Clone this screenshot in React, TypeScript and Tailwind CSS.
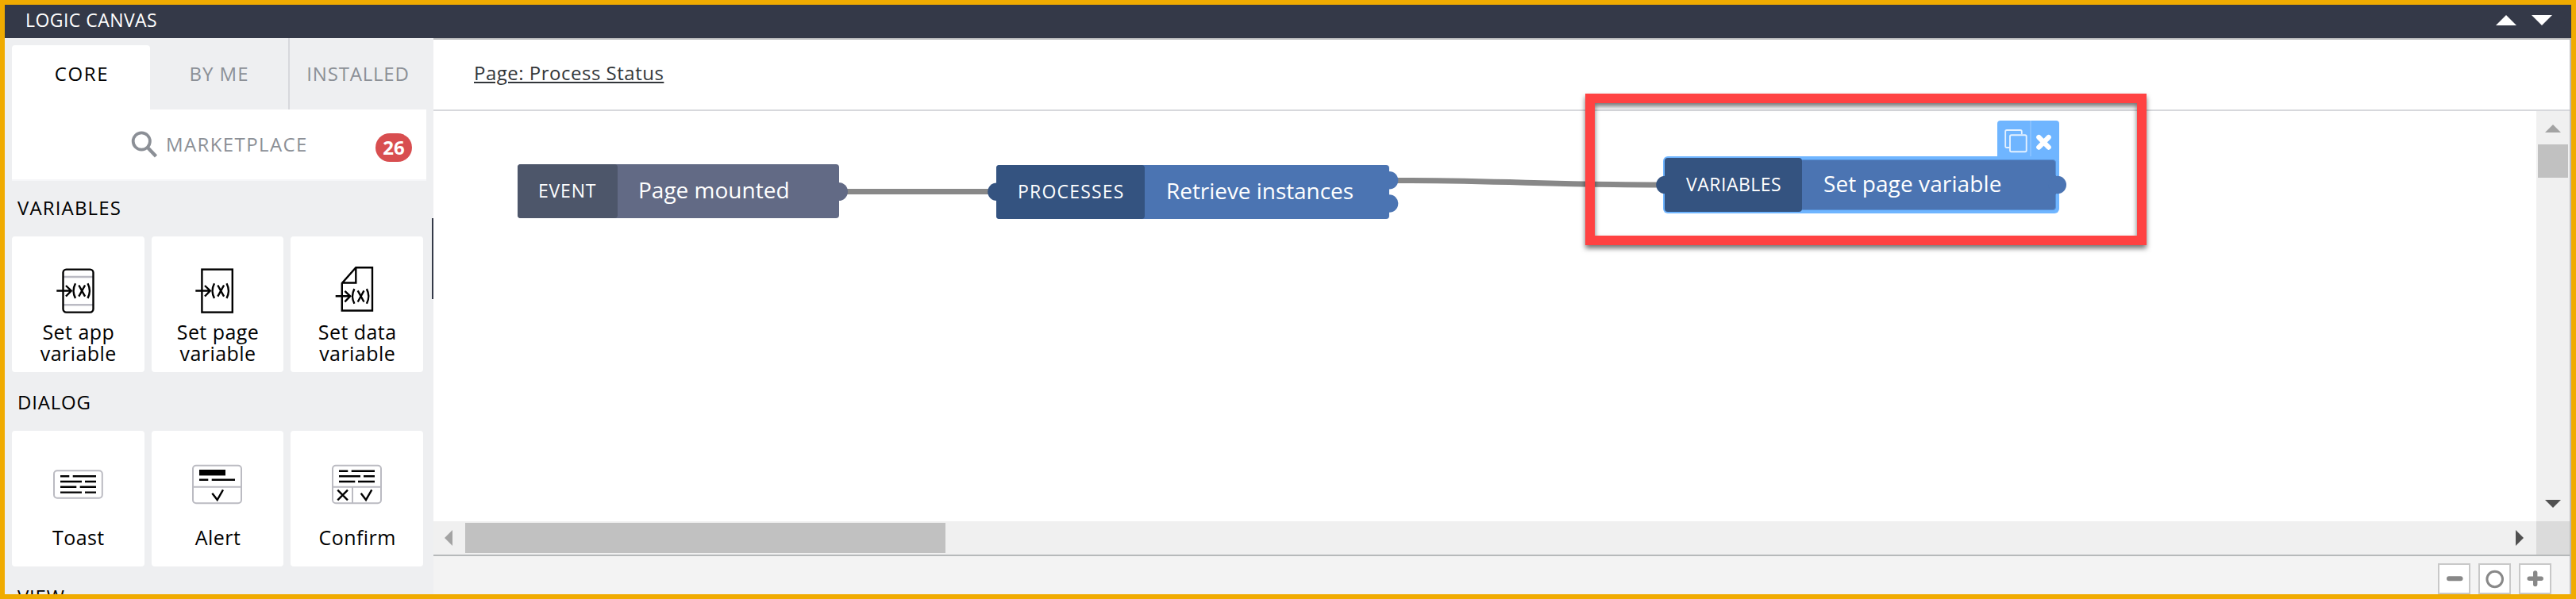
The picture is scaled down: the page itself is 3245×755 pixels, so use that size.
import type { ReactNode } from "react";

function Glyph({ dx = 0, dy = 0 }: { dx?: number; dy?: number }) {
  return (
    <g transform={`translate(${dx} ${dy})`} strokeWidth="2.4">
      <path d="M56.3 68.5H74.5M68 62l6.8 6.5L68 75.5" />
      <path d="M80 59.3q-4.8 9.3 0 18.6M95.5 59.3q4.8 9.3 0 18.6" />
      <path d="M84.3 61.5l7.8 14.2M92.1 61.5l-7.8 14.2" />
    </g>
  );
}

const icons: Record<string, ReactNode> = {
  app: (
    <>
      <path d="M65 51h37M65 86.3h37" stroke="#bbbbc4" strokeWidth="2.4" />
      <rect x="64.5" y="41.6" width="38" height="54" rx="4" />
      <Glyph />
    </>
  ),
  page: (
    <>
      <rect x="63.4" y="41.6" width="38.4" height="54" />
      <Glyph dx={-1} />
    </>
  ),
  data: (
    <>
      <path d="M82.3 39.2H103V93.5H64.8V59zM82.3 39.2V58.5H64.8" />
      <Glyph dx={0.4} dy={6.8} />
    </>
  ),
  toast: (
    <>
      <rect x="53" y="50.2" width="60.8" height="34.6" rx="4" stroke="#bbbbc2" strokeWidth="2" />
      <path d="M61 57.3h11.3M76.7 57.3H106M61 64h27M92 64h14M61 70.7h20.3M85.7 70.7H106M61 77.6h27M92 77.6h14" />
    </>
  ),
  alert: (
    <>
      <path d="M51.5 70.7h62" stroke="#bbbbc2" strokeWidth="2" />
      <rect x="52" y="43.7" width="61" height="47.5" rx="4" stroke="#bbbbc2" strokeWidth="2" />
      <rect x="60" y="49" width="33" height="7.4" fill="#000" stroke="none" />
      <path d="M60 61.8h11.3M75.7 61.8H105M76.3 78.7l6.4 8.3L90 74.3" />
    </>
  ),
  confirm: (
    <>
      <path d="M52.5 70.7h62M78 70.7v21" stroke="#bbbbc2" strokeWidth="2" />
      <rect x="53" y="43.7" width="61" height="47.5" rx="4" stroke="#bbbbc2" strokeWidth="2" />
      <path d="M61 50.7h11.3M76.7 50.7H106M61 57.3h27M92 57.3h14M61 64h20.3M85 64h21" />
      <path d="M59.3 74.7L72 87.3M72 74.7L59.3 87.3M88.7 78.7L95 87l7.3-12.7" />
    </>
  ),
};

function Card({ icon, label }: { icon: string; label: string }) {
  return (
    <div className="flex h-[171px] flex-1 flex-col overflow-hidden rounded bg-white">
      <svg className="h-[100px] w-full shrink-0" viewBox="0 0 166.67 100" fill="none" stroke="#000" strokeWidth="2.4">
        {icons[icon]}
      </svg>
      <div className="flex flex-1 items-center justify-center pb-[3px] pl-px text-center text-[25px] leading-[27px] tracking-[0.45px] whitespace-pre-line text-black">
        {label}
      </div>
    </div>
  );
}

function Section({ title, cards, first }: { title: string; cards: [string, string][]; first?: boolean }) {
  return (
    <section>
      <h2
        className={
          (first ? "h-[70px] pb-[2px] tracking-[1.15px]" : "h-[74px] pt-px tracking-[0.8px]") +
          " flex items-center pl-[16px] text-[24px] text-black"
        }
      >
        {title}
      </h2>
      <div className="flex gap-[9px] pr-[13px] pl-[9px]">
        {cards.map(([icon, label]) => (
          <Card key={icon} icon={icon} label={label} />
        ))}
      </div>
    </section>
  );
}

function Sidebar() {
  return (
    <aside className="relative w-[540px] shrink-0 overflow-hidden bg-[#eeeff1]">
      <nav className="flex h-[90px] pl-[9px] text-[24px] text-[#8b8f96]">
        <div className="mt-[9px] flex w-[174px] items-center justify-center rounded-t bg-white pb-[9px] pl-[2px] tracking-[1.6px] text-black">
          CORE
        </div>
        <div className="flex w-[176px] items-center justify-center border-r-2 border-[#d7d8dc] tracking-[1px]">BY ME</div>
        <div className="flex w-[172px] items-center justify-center tracking-[0.8px]">INSTALLED</div>
      </nav>
      <div className="ml-[9px] flex h-[90px] w-[522px] items-center border-b-2 border-[#f5f6f8] bg-white pl-[150px] text-[24px] text-[#8b8f96]">
        <svg className="h-[34px] w-[34px]" viewBox="0 0 34 34" fill="none" stroke="#8b8f96">
          <circle cx="13.3" cy="13" r="10.6" strokeWidth="3.8" />
          <path d="M21.5 21.5L31.5 32" strokeWidth="4.4" />
        </svg>
        <span className="-mt-px ml-[10px] tracking-[1.4px]">MARKETPLACE</span>
        <span className="mt-[8px] mr-[18px] ml-auto flex h-[36px] w-[46px] items-center justify-center rounded-full bg-[#d84e50] pb-px font-bold text-white">
          26
        </span>
      </div>
      <Section
        first
        title="VARIABLES"
        cards={[
          ["app", "Set app\nvariable"],
          ["page", "Set page\nvariable"],
          ["data", "Set data\nvariable"],
        ]}
      />
      <Section
        title="DIALOG"
        cards={[
          ["toast", "Toast"],
          ["alert", "Alert"],
          ["confirm", "Confirm"],
        ]}
      />
      <Section title="VIEW" cards={[]} />
      <div className="absolute top-[227px] right-0 h-[102px] w-[2px] bg-[#343948]" />
    </aside>
  );
}

function Canvas() {
  return (
    <div className="relative h-[517px] flex-1 overflow-hidden bg-white">
      <svg className="absolute inset-0 h-[517px] w-[2649px]" viewBox="546 140 2649 517" fill="none">
        <path d="M1060 241.5H1250M1755 227.5C1890 227.5 1955 233 2092 233" stroke="#888" strokeWidth="7" />
        <circle cx="1056.5" cy="241.5" r="11.5" fill="#626a85" />
        <circle cx="1255.5" cy="241.8" r="11.3" fill="#345380" />
        <circle cx="1750" cy="227.3" r="11.3" fill="#4b74b2" />
        <circle cx="1750" cy="256.5" r="11.3" fill="#4b74b2" />
      </svg>

      <div className="absolute top-[67px] left-[106px] flex h-[68px] w-[405px] rounded bg-[#626a85] text-white">
        <div className="flex w-[126px] items-center rounded bg-[#4d566a] pb-[2px] pl-[26px] text-[23px] tracking-[0.8px]">EVENT</div>
        <div className="flex items-center pb-[5px] pl-[26px] text-[28px]">Page mounted</div>
      </div>

      <div className="absolute top-[68px] left-[709px] flex h-[68px] w-[495px] rounded bg-[#4b74b2] text-white">
        <div className="flex w-[187px] items-center rounded bg-[#345380] pb-[2px] pl-[27px] text-[23px] tracking-[1.2px]">PROCESSES</div>
        <div className="flex items-center pb-[5px] pl-[27px] text-[28px] tracking-[-0.05px]">Retrieve instances</div>
      </div>

      <div className="absolute top-[12px] left-[1969.5px] flex h-[50px] w-[78.5px] rounded-t bg-[#6fb5ff]">
        <svg className="h-[50px] w-[78.5px]" viewBox="2515.5 152 78.5 50" fill="none">
          <path d="M2557.5 152v45" stroke="#96c9ff" strokeWidth="1.2" />
          <path
            d="M2531 186h-3.5q-1.8 0-1.8-1.8v-18.4q0-1.8 1.8-1.8h17q1.8 0 1.8 1.8v3.5"
            stroke="#e4f1ff"
            strokeWidth="1.8"
          />
          <rect x="2531.5" y="170.2" width="20.7" height="21" rx="1.8" stroke="#e4f1ff" strokeWidth="1.9" />
          <path d="M2567.8 173l12.4 12.6M2580.2 173l-12.4 12.6" stroke="#fff" strokeWidth="6.2" strokeLinecap="round" />
        </svg>
      </div>
      <div className="absolute top-[57px] left-[1549px] flex h-[72px] w-[499px] rounded-md bg-[#6fb5ff] py-[2px] pl-[2px] text-white">
        <div className="z-10 flex w-[173px] items-center rounded bg-[#345380] pb-[2px] pl-[27px] text-[23px] tracking-[0.5px]">VARIABLES</div>
        <div className="-ml-[3px] my-[2px] flex w-[323px] items-center rounded-sm border border-[#5590d8] bg-[#4b74b2] pb-[5px] pl-[29px] text-[28px] tracking-[0.1px]">
          Set page variable
        </div>
      </div>
      <svg className="absolute top-[80px] left-[1538px] h-[26px] w-[522px]" viewBox="2084 220 522 26">
        <circle cx="2097.5" cy="233" r="11.3" fill="#345380" />
        <circle cx="2591.7" cy="233" r="11.3" fill="#4b74b2" />
        <path d="M2586 221h4v24h-4z" fill="#4b74b2" />
      </svg>
    </div>
  );
}

function ZoomButton({ children }: { children: ReactNode }) {
  return (
    <div className="h-[39px] w-[41px] border-2 border-[#c8c8c8] bg-white">
      <svg className="h-[35px] w-[37px]" viewBox="0 0 37 35" fill="none" stroke="#888" strokeLinecap="round">
        {children}
      </svg>
    </div>
  );
}

function Triangle({ points, fill, className }: { points: string; fill: string; className: string }) {
  return (
    <svg className={className} fill={fill}>
      <polygon points={points} />
    </svg>
  );
}

export default function App() {
  return (
    <div className="relative flex h-[755px] w-[3245px] flex-col overflow-hidden border-6 border-[#f0ab00] bg-white font-['Open_Sans',sans-serif]">
      <header className="flex h-[42px] shrink-0 items-center bg-[#343948] pr-[24px] pl-[26px] text-[23px] text-white">
        <span className="-mt-[4px] tracking-[0.45px]">LOGIC CANVAS</span>
        <Triangle className="-mt-[3px] ml-auto h-[13px] w-[26px]" fill="#fff" points="0,13 13,0 26,13" />
        <Triangle className="-mt-[3px] ml-[19px] h-[13px] w-[26px]" fill="#fff" points="0,0 26,0 13,13" />
      </header>
      <div className="flex min-h-0 flex-1">
        <Sidebar />
        <main className="flex min-w-0 flex-1 flex-col border-t-2 border-r-2 border-[#b9babc]">
          <div className="flex h-[90px] shrink-0 items-center border-b-2 border-[#d7d8dc] pl-[51px] text-[24px] tracking-[0.5px] text-[#32363a]">
            <span className="-mt-[4px] underline decoration-2 underline-offset-[2px]">Page: Process Status</span>
          </div>
          <div className="flex h-[517px] shrink-0">
            <Canvas />
            <div className="flex w-[42px] shrink-0 flex-col items-center bg-[#f0f0f0] pt-[17px] pb-[17px]">
              <Triangle className="h-[10px] w-[20px]" fill="#a3a3a3" points="0,10 10,0 20,10" />
              <div className="mt-[15px] h-[42px] w-[38px] bg-[#c1c1c1]" />
              <Triangle className="mt-auto h-[10px] w-[20px]" fill="#505050" points="0,0 20,0 10,10" />
            </div>
          </div>
          <div className="flex h-[42px] shrink-0">
            <div className="flex flex-1 items-center bg-[#f0f0f0] pr-[16px] pl-[14px]">
              <Triangle className="h-[20px] w-[10px]" fill="#a3a3a3" points="10,0 0,10 10,20" />
              <div className="ml-[16px] h-[38px] w-[605px] bg-[#c1c1c1]" />
              <Triangle className="ml-auto h-[20px] w-[10px]" fill="#505050" points="0,0 10,10 0,20" />
            </div>
            <div className="w-[42px] bg-[#dbdbdb]" />
          </div>
          <footer className="flex min-h-0 flex-1 items-end justify-end gap-[10px] border-t-2 border-[#b6b9ba] bg-[#f3f3f3] pr-[23px]">
            <ZoomButton>
              <path d="M12 17.2h14.5" strokeWidth="6" />
            </ZoomButton>
            <ZoomButton>
              <circle cx="18.7" cy="18" r="9.8" strokeWidth="3" />
            </ZoomButton>
            <ZoomButton>
              <path d="M11.2 17.2h15M18.7 10v14.5" strokeWidth="5.4" />
            </ZoomButton>
          </footer>
        </main>
      </div>
      <div className="pointer-events-none absolute top-[112px] left-[1991px] h-[191px] w-[707px] border-12 border-[#ff4242] drop-shadow-[0_4px_3px_rgba(0,0,0,0.55)]" />
    </div>
  );
}
